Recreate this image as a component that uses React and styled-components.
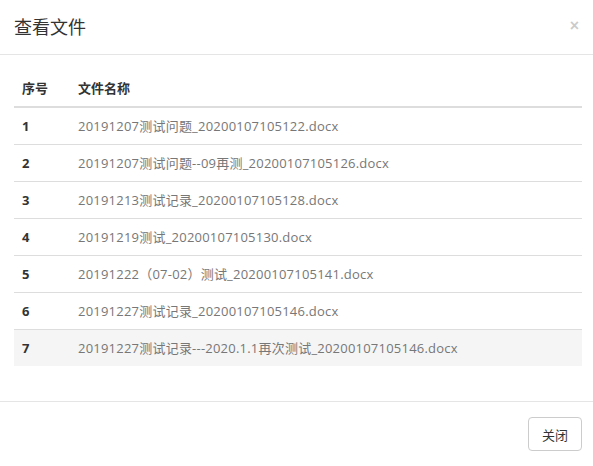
import React from "react";
import styled, { createGlobalStyle } from "styled-components";

const files = [
  "20191207测试问题_20200107105122.docx",
  "20191207测试问题--09再测_20200107105126.docx",
  "20191213测试记录_20200107105128.docx",
  "20191219测试_20200107105130.docx",
  "20191222（07-02）测试_20200107105141.docx",
  "20191227测试记录_20200107105146.docx",
  "20191227测试记录---2020.1.1再次测试_20200107105146.docx",
];

const GlobalStyle = createGlobalStyle`
  html, body {
    margin: 0;
    padding: 0;
    background: #fff;
    overflow: hidden;
  }
  body {
    font-family: "Open Sans", "Noto Sans CJK SC", sans-serif;
    font-size: 13px;
    color: #333;
  }
`;

const Dialog = styled.div`
  width: 593px;
  height: 466px;
  background: #fff;
  display: flex;
  flex-direction: column;
`;

const Header = styled.div`
  height: 55px;
  box-sizing: border-box;
  padding: 0 11px 1px 14px;
  display: flex;
  align-items: center;
  justify-content: space-between;
  border-bottom: 1px solid #e5e5e5;
`;

const Title = styled.h4`
  margin: 0;
  font-size: 18px;
  font-weight: 400;
  color: #333;
  line-height: 24px;
`;

const Close = styled.button`
  border: 0;
  background: none;
  padding: 0 3px 2px 0;
  font-family: "Liberation Sans", sans-serif;
  font-size: 16px;
  font-weight: 700;
  line-height: 1;
  color: #000;
  opacity: 0.2;
  cursor: pointer;
`;

const Body = styled.div`
  padding: 15px 11px 15px 14px;
  border-bottom: 1px solid #e5e5e5;
`;

const Table = styled.table`
  width: 100%;
  margin-bottom: 20px;
  border-collapse: collapse;
  border-spacing: 0;
`;

const Th = styled.th`
  text-align: left;
  font-weight: 700;
  color: #333;
  padding: 8px;
  line-height: 20px;
  border-bottom: 2px solid #ddd;
  width: ${(p) => (p.$narrow ? "40px" : "auto")};
`;

const Row = styled.tr`
  background: ${(p) => (p.$active ? "#f5f5f5" : "transparent")};
`;

const Td = styled.td`
  padding: 8px;
  line-height: 20px;
  border-top: 1px solid #ddd;
  color: ${(p) => (p.$index ? "#333" : "#777")};
  font-weight: ${(p) => (p.$index ? 700 : 400)};
  letter-spacing: ${(p) => (p.$index ? "0" : "0.22px")};
  white-space: nowrap;
`;

const Footer = styled.div`
  flex: 1;
  display: flex;
  align-items: center;
  justify-content: flex-end;
  padding: 0 11px 0 14px;
`;

const Button = styled.button`
  font-family: "Open Sans", "Noto Sans CJK SC", sans-serif;
  font-size: 13px;
  color: #333;
  background: #fff;
  border: 1px solid #ccc;
  border-radius: 4px;
  padding: 0 12px;
  height: 34px;
  width: 54px;
  cursor: pointer;
`;

export default function App() {
  return (
    <>
      <GlobalStyle />
      <Dialog>
        <Header>
          <Title>查看文件</Title>
          <Close aria-label="关闭">×</Close>
        </Header>
        <Body>
          <Table>
            <thead>
              <tr>
                <Th $narrow>序号</Th>
                <Th>文件名称</Th>
              </tr>
            </thead>
            <tbody>
              {files.map((name, i) => (
                <Row key={i} $active={i === files.length - 1}>
                  <Td $index>{i + 1}</Td>
                  <Td>{name}</Td>
                </Row>
              ))}
            </tbody>
          </Table>
        </Body>
        <Footer>
          <Button>关闭</Button>
        </Footer>
      </Dialog>
    </>
  );
}
